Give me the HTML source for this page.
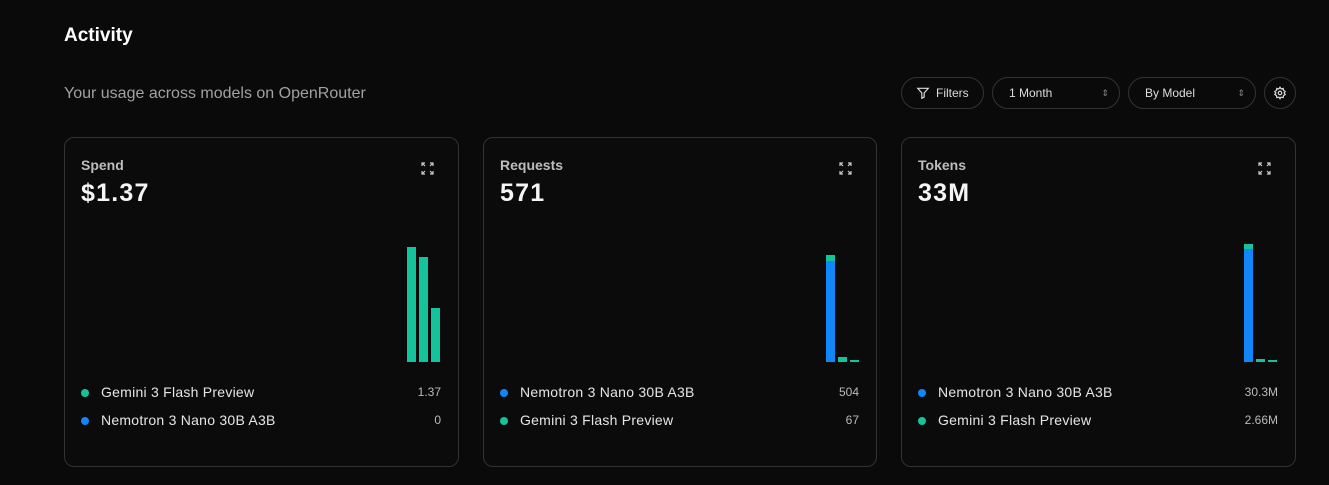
<!DOCTYPE html>
<html><head><style>
*{margin:0;padding:0;box-sizing:border-box}
body{width:1329px;height:485px;background:#0a0a0a;font-family:"Liberation Sans",sans-serif;color:#fff;position:relative;overflow:hidden}
.abs{position:absolute}
h1{position:absolute;left:64px;top:25px;font-size:19px;font-weight:bold}
.sub{left:64px;top:85px;font-size:16px;color:#a1a1a1}
.btn{position:absolute;top:77px;height:32px;border:1px solid #333;border-radius:16px;font-size:12px;color:#ddd;line-height:30px}
.card{position:absolute;top:137px;width:395px;height:330px;border:1px solid #333;border-radius:10px;background:#0b0b0b}
.lbl{position:absolute;left:16px;top:19px;font-size:14px;color:#bdbdbd;font-weight:bold}
.val{position:absolute;left:16px;top:41px;font-size:25px;font-weight:bold;color:#f5f5f5;letter-spacing:1.2px}
.exp{position:absolute;right:24px;top:24px}
.bar{position:absolute;width:9px}
.row{position:absolute;left:16px;right:17px;font-size:14px;color:#e5e5e5;height:20px}
.row .d{position:absolute;left:0;top:6px;width:8px;height:8px;border-radius:50%}
.row .n{position:absolute;left:20px;top:1px;letter-spacing:0.25px}
.row .v{position:absolute;right:0;top:2px;font-size:12px;color:#bbb}
.g{background:#14c39a}.b{background:#1186f8}
</style></head><body>
<h1>Activity</h1>
<div class="abs sub">Your usage across models on OpenRouter</div>
<div class="btn" style="left:901px;width:83px;padding-left:34px">Filters
<svg class="abs" style="left:14px;top:8px" width="14" height="14" viewBox="0 0 24 24" fill="none" stroke="#ddd" stroke-width="2"><path d="M3 4h18l-7 8v7l-4 2v-9z"/></svg></div>
<div class="btn" style="left:992px;width:128px;padding-left:16px">1 Month<span class="abs" style="right:10px;top:0;font-size:9px;color:#888">&#8661;</span></div>
<div class="btn" style="left:1128px;width:128px;padding-left:16px">By Model<span class="abs" style="right:10px;top:0;font-size:9px;color:#888">&#8661;</span></div>
<div class="btn" style="left:1264px;width:32px">
<svg class="abs" style="left:8px;top:8px" width="14" height="14" viewBox="0 0 24 24" fill="none" stroke="#ddd" stroke-width="2"><circle cx="12" cy="12" r="3"/><path d="M12 2l2 3 3.5-1 .5 3.5 3 2-2 2.5 2 2.5-3 2-.5 3.5-3.5-1-2 3-2-3-3.5 1-.5-3.5-3-2 2-2.5-2-2.5 3-2L6.5 4 10 5z"/></svg></div>

<div class="card" style="left:64px">
<div class="lbl">Spend</div><div class="val">$1.37</div>
<svg class="exp" width="13" height="13" viewBox="0 0 13 13" fill="none" stroke="#ccc" stroke-width="1.2"><path d="M1 4V1h3M1 1l3 3M12 4V1H9M12 1L9 4M1 9v3h3M1 12l3-3M12 9v3H9M12 12L9 9"/></svg>
<div class="bar g" style="left:342px;top:109px;height:115px"></div>
<div class="bar g" style="left:354px;top:119px;height:105px"></div>
<div class="bar g" style="left:366px;top:170px;height:54px"></div>
<div class="row" style="top:245px"><span class="d g"></span><span class="n">Gemini 3 Flash Preview</span><span class="v">1.37</span></div>
<div class="row" style="top:273px"><span class="d b"></span><span class="n">Nemotron 3 Nano 30B A3B</span><span class="v">0</span></div>
</div>

<div class="card" style="left:483px;width:394px">
<div class="lbl">Requests</div><div class="val">571</div>
<svg class="exp" width="13" height="13" viewBox="0 0 13 13" fill="none" stroke="#ccc" stroke-width="1.2"><path d="M1 4V1h3M1 1l3 3M12 4V1H9M12 1L9 4M1 9v3h3M1 12l3-3M12 9v3H9M12 12L9 9"/></svg>
<div class="bar b" style="left:342px;top:117px;height:107px;border-top:6px solid #14c39a"></div>
<div class="bar g" style="left:354px;top:219px;height:5px"></div>
<div class="bar g" style="left:366px;top:222px;height:2px"></div>
<div class="row" style="top:245px"><span class="d b"></span><span class="n">Nemotron 3 Nano 30B A3B</span><span class="v">504</span></div>
<div class="row" style="top:273px"><span class="d g"></span><span class="n">Gemini 3 Flash Preview</span><span class="v">67</span></div>
</div>

<div class="card" style="left:901px">
<div class="lbl">Tokens</div><div class="val">33M</div>
<svg class="exp" width="13" height="13" viewBox="0 0 13 13" fill="none" stroke="#ccc" stroke-width="1.2"><path d="M1 4V1h3M1 1l3 3M12 4V1H9M12 1L9 4M1 9v3h3M1 12l3-3M12 9v3H9M12 12L9 9"/></svg>
<div class="bar b" style="left:342px;top:106px;height:118px;border-top:5px solid #14c39a"></div>
<div class="bar g" style="left:354px;top:221px;height:3px"></div>
<div class="bar g" style="left:366px;top:222px;height:2px"></div>
<div class="row" style="top:245px"><span class="d b"></span><span class="n">Nemotron 3 Nano 30B A3B</span><span class="v">30.3M</span></div>
<div class="row" style="top:273px"><span class="d g"></span><span class="n">Gemini 3 Flash Preview</span><span class="v">2.66M</span></div>
</div>
</body></html>
